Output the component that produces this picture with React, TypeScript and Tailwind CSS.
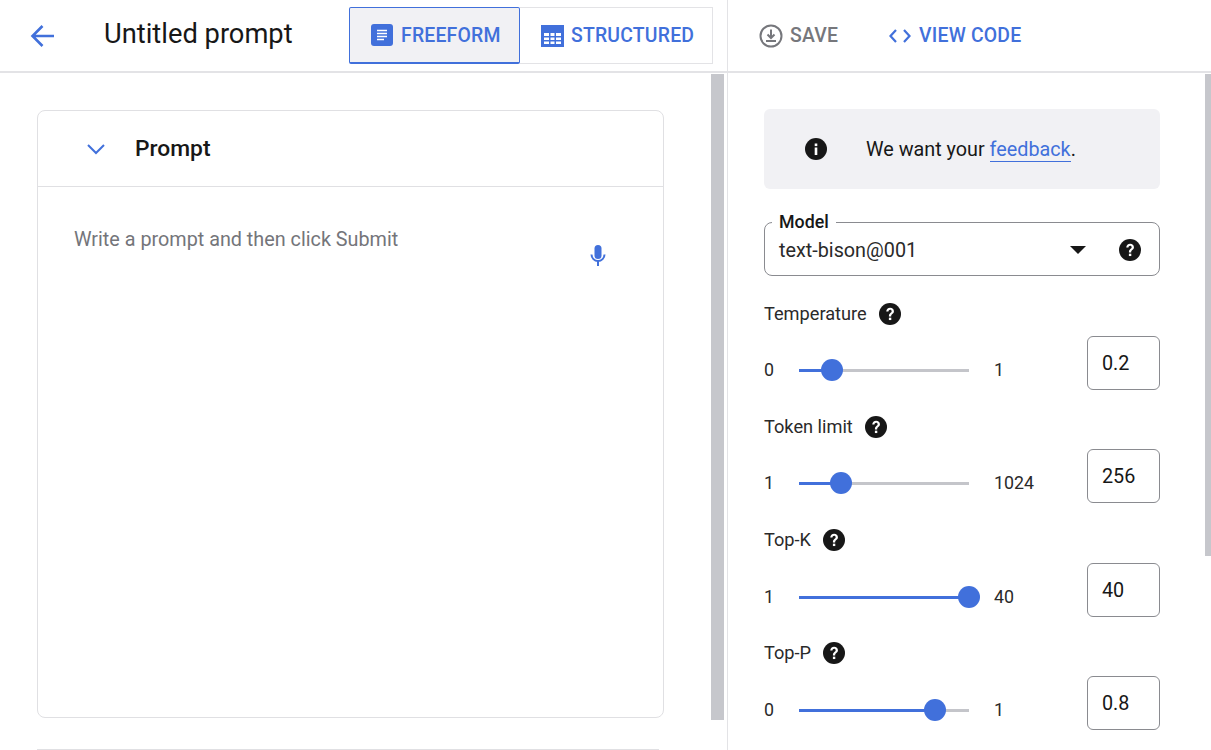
const BLUE = "#4170db";

function HelpIcon({ size = 22 }: { size?: number }) {
  return (
    <svg width={size} height={size} viewBox="0 0 24 24" className="shrink-0">
      <circle cx="12" cy="12" r="12" fill="#171717" />
      <path
        d="M7.9 9.4c.1-2.4 1.9-4.1 4.2-4.1 2.4 0 4.2 1.5 4.2 3.6 0 1.6-.9 2.4-1.8 3.2-.9.8-1.2 1.2-1.2 2.5h-2.5c0-2 .5-2.7 1.6-3.7.9-.8 1.4-1.2 1.4-2 0-1-.7-1.6-1.7-1.6-1.1 0-1.7.8-1.8 2.1H7.9z"
        fill="#fff"
      />
      <rect x="10.8" y="16" width="2.6" height="2.6" fill="#fff" />
    </svg>
  );
}

type SliderProps = { min: string; max: string; value: string; pct: number; tight?: boolean };

function Slider({ min, max, value, pct, tight }: SliderProps) {
  return (
    <div className={tight ? "flex mt-[11px]" : "flex mt-[12px]"}>
      <div className="flex items-center w-[323px] mt-[7px] h-[54px] text-[17.8px] text-[#2a2a2a]">
        <span className="w-[35px]">{min}</span>
        <div className="relative w-[170px] h-[3px] bg-[#c4c5ca]">
          <div className="h-full bg-[#4170db]" style={{ width: `${pct}%` }} />
          <div
            className="absolute top-[-10px] ml-[-11px] w-[22px] h-[22px] rounded-full bg-[#4170db]"
            style={{ left: `${pct}%` }}
          />
        </div>
        <span className="ml-[25px]">{max}</span>
      </div>
      <div className="w-[73px] h-[54px] border border-[#8a8b90] rounded-md pl-[14px] pt-[13px] text-[19.8px] leading-[28px] text-[#171717]">
        {value}
      </div>
    </div>
  );
}

function Setting({ label, ...rest }: { label: string } & SliderProps) {
  return (
    <div className="h-[113px]">
      <div className="flex items-center gap-[12px] h-[22px] text-[18.2px] text-[#2a2a2a]">
        {label}
        <HelpIcon />
      </div>
      <Slider {...rest} />
    </div>
  );
}

export default function App() {
  return (
    <div className="flex h-[750px] w-[1211px] overflow-hidden bg-white font-['Roboto',sans-serif]">
      {/* left side */}
      <div className="w-[728px] shrink-0 border-r border-[#e3e3e6] flex flex-col">
        <div className="h-[73px] shrink-0 border-b-2 border-[#e3e3e6] flex items-center pl-[30px]">
          <svg width="24" height="26" viewBox="0 0 24 26" fill="none" stroke={BLUE} strokeWidth="2.6">
            <path d="M24 13H2.5M12.5 3 2.5 13l10 10" />
          </svg>
          <div className="ml-[50px] w-[245px] mt-[-3px] text-[27.3px] text-[#171717]">Untitled prompt</div>
          <div className="flex h-[57px] text-[19.4px] font-medium text-[#4170db] tracking-[0.2px]">
            <div className="w-[171px] flex items-center pl-[21px] pt-px gap-[8px] bg-[#f1f1f4] border border-b-2 border-[#4170db] rounded-[2px]">
              <svg width="22" height="22" viewBox="0 0 22 22" className="mt-[-1px]">
                <rect width="22" height="22" rx="3" fill={BLUE} />
                <path d="M6 6.5h10M6 9.5h10M6 12.5h10M6 15.5h7" stroke="#fff" strokeWidth="1.3" />
              </svg>
              FREEFORM
            </div>
            <div className="w-[193px] flex items-center pl-[21px] gap-[7px] border border-l-0 border-[#e3e3e6]">
              <svg width="23" height="22" viewBox="0 0 23 22">
                <rect width="23" height="22" fill={BLUE} />
                <path
                  d="M3 8h5v3H3zM9.5 8h4v3h-4zM15 8h5v3h-5zM3 12.5h5V15H3zM9.5 12.5h4V15h-4zM15 12.5h5V15h-5zM3 16.5h5V19H3zM9.5 16.5h4V19h-4zM15 16.5h5V19h-5z"
                  fill="#fff"
                />
              </svg>
              STRUCTURED
            </div>
          </div>
        </div>
        <div className="flex flex-1 min-h-0">
          <div className="w-[711px] pl-[37px] pt-[37px] overflow-hidden">
            <div className="w-[627px] h-[608px] border border-[#e0e0e3] rounded-lg flex flex-col">
              <div className="h-[76px] border-b border-[#e0e0e3] flex items-center pl-[48px] gap-[29px] text-[22.8px] font-medium text-[#171717]">
                <svg width="20" height="12" viewBox="0 0 20 12" fill="none" stroke={BLUE} strokeWidth="2">
                  <path d="m2 2 8 8 8-8" />
                </svg>
                <span className="pt-px">Prompt</span>
              </div>
              <div className="flex justify-between pl-[36px] pr-[55px] pt-[38px] text-[19.8px] text-[#74757a]">
                <span>Write a prompt and then click Submit</span>
                <svg width="20" height="26" viewBox="0 0 20 26" fill={BLUE} className="mt-[18px]">
                  <rect x="6.5" y="2" width="7" height="14" rx="3.5" />
                  <path d="M3.5 11.5a6.5 6.5 0 0 0 13 0" fill="none" stroke={BLUE} strokeWidth="2" />
                  <rect x="9" y="17" width="2" height="6" />
                </svg>
              </div>
            </div>
            <div className="w-[622px] h-[20px] mt-[31px] border-t border-[#e0e0e3]" />
          </div>
          <div className="w-[13px] h-[646px] mt-px bg-[#c6c7cc]" />
        </div>
      </div>

      {/* right side */}
      <div className="flex-1 flex flex-col">
        <div className="h-[73px] shrink-0 border-b-2 border-[#e3e3e6] flex items-center pl-[31px] text-[19.4px] font-medium tracking-[0.2px]">
          <svg width="24" height="24" viewBox="0 0 24 24" fill="none" stroke="#76777c" strokeWidth="2">
            <circle cx="12" cy="12" r="10.5" />
            <path d="M12 5.5v8M8.5 10.5l3.5 3.5 3.5-3.5" />
            <path d="M7 17h10" />
          </svg>
          <span className="ml-[7px] text-[#76777c]">SAVE</span>
          <svg width="24" height="18" viewBox="0 0 24 18" fill="none" stroke={BLUE} strokeWidth="2.2" className="ml-[50px]">
            <path d="M8 3 2.5 9 8 15M16 3l5.5 6-5.5 6" />
          </svg>
          <span className="ml-[7px] text-[#4170db]">VIEW CODE</span>
        </div>
        <div className="flex flex-1 min-h-0">
          <div className="w-[477px] pl-[36px] pt-[36px] overflow-hidden">
            <div className="w-[396px]">
              <div className="h-[80px] bg-[#f1f1f4] rounded-md flex items-center pl-[41px] text-[19.8px] text-[#171717]">
                <svg width="22" height="22" viewBox="0 0 22 22" className="shrink-0">
                  <circle cx="11" cy="11" r="11" fill="#171717" />
                  <rect x="9.7" y="9.5" width="2.6" height="7.5" fill="#fff" />
                  <rect x="9.7" y="5.5" width="2.6" height="2.6" fill="#fff" />
                </svg>
                <span className="ml-[39px] pt-[2px]">
                  We want your{" "}
                  <span className="text-[#4170db] border-b border-[#4170db]">feedback</span>.
                </span>
              </div>
              <fieldset className="mt-[25px] h-[62px] border border-[#8a8b90] rounded-lg px-[14px]">
                <legend className="ml-[-7px] pl-[7px] pr-[7px] text-[17.8px] leading-[16px] font-medium text-[#171717]">Model</legend>
                <div className="flex items-center h-[36px] mt-[2px] text-[19.8px] text-[#2a2a2a]">
                  <span className="flex-1 pt-[2px]">text-bison@001</span>
                  <div className="w-0 h-0 border-x-[8px] border-x-transparent border-t-[8px] border-t-[#171717] mr-[33px]" />
                  <div className="mr-[4px]">
                    <HelpIcon />
                  </div>
                </div>
              </fieldset>
              <div className="mt-[27px]">
                <Setting label="Temperature" min="0" max="1" value="0.2" pct={19.5} tight />
                <Setting label="Token limit" min="1" max="1024" value="256" pct={24.5} tight />
                <Setting label="Top-K" min="1" max="40" value="40" pct={100} />
                <Setting label="Top-P" min="0" max="1" value="0.8" pct={80} />
              </div>
            </div>
          </div>
          <div className="w-[6px] h-[482px] mt-px bg-[#c6c7cc]" />
        </div>
      </div>
    </div>
  );
}
